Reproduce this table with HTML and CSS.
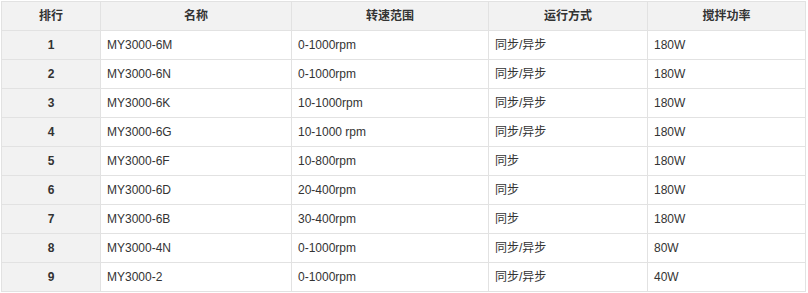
FILE: index.html
```html
<!DOCTYPE html>
<html lang="zh">
<head>
<meta charset="utf-8">
<link rel="stylesheet" href="styles.css">
</head>
<body>
<table class="spec">
  <colgroup>
    <col class="c1"><col class="c2"><col class="c3"><col class="c4"><col class="c5">
  </colgroup>
  <thead>
    <tr><th>排行</th><th>名称</th><th>转速范围</th><th>运行方式</th><th>搅拌功率</th></tr>
  </thead>
  <tbody>
    <tr><td class="rank">1</td><td>MY3000-6M</td><td>0-1000rpm</td><td>同步/异步</td><td>180W</td></tr>
    <tr><td class="rank">2</td><td>MY3000-6N</td><td>0-1000rpm</td><td>同步/异步</td><td>180W</td></tr>
    <tr><td class="rank">3</td><td>MY3000-6K</td><td>10-1000rpm</td><td>同步/异步</td><td>180W</td></tr>
    <tr><td class="rank">4</td><td>MY3000-6G</td><td>10-1000 rpm</td><td>同步/异步</td><td>180W</td></tr>
    <tr><td class="rank">5</td><td>MY3000-6F</td><td>10-800rpm</td><td>同步</td><td>180W</td></tr>
    <tr><td class="rank">6</td><td>MY3000-6D</td><td>20-400rpm</td><td>同步</td><td>180W</td></tr>
    <tr><td class="rank">7</td><td>MY3000-6B</td><td>30-400rpm</td><td>同步</td><td>180W</td></tr>
    <tr><td class="rank">8</td><td>MY3000-4N</td><td>0-1000rpm</td><td>同步/异步</td><td>80W</td></tr>
    <tr><td class="rank">9</td><td>MY3000-2</td><td>0-1000rpm</td><td>同步/异步</td><td>40W</td></tr>
  </tbody>
</table>
</body>
</html>
```

FILE: styles.css
```css
html, body {
  margin: 0;
  padding: 0;
  background: #ffffff;
}
body {
  padding: 1px 0 0 1px;
  font-family: "Liberation Sans", "Noto Sans CJK SC", sans-serif;
  font-size: 12px;
  color: #333333;
}
.spec {
  border-collapse: collapse;
  table-layout: fixed;
  width: 804px;
}
.c1 { width: 99px; }
.c2 { width: 191px; }
.c3 { width: 197px; }
.c4 { width: 159px; }
.c5 { width: 158px; }
.spec th,
.spec td {
  border: 1px solid #e2e2e2;
  height: 29px;
  padding: 0 6px;
  box-sizing: border-box;
  white-space: nowrap;
  line-height: 16px;
}
.spec th {
  background: #f2f2f2;
  font-weight: bold;
  text-align: center;
}
.spec td {
  text-align: left;
}
.spec td.rank {
  background: #f2f2f2;
  font-weight: bold;
  text-align: center;
}
```
